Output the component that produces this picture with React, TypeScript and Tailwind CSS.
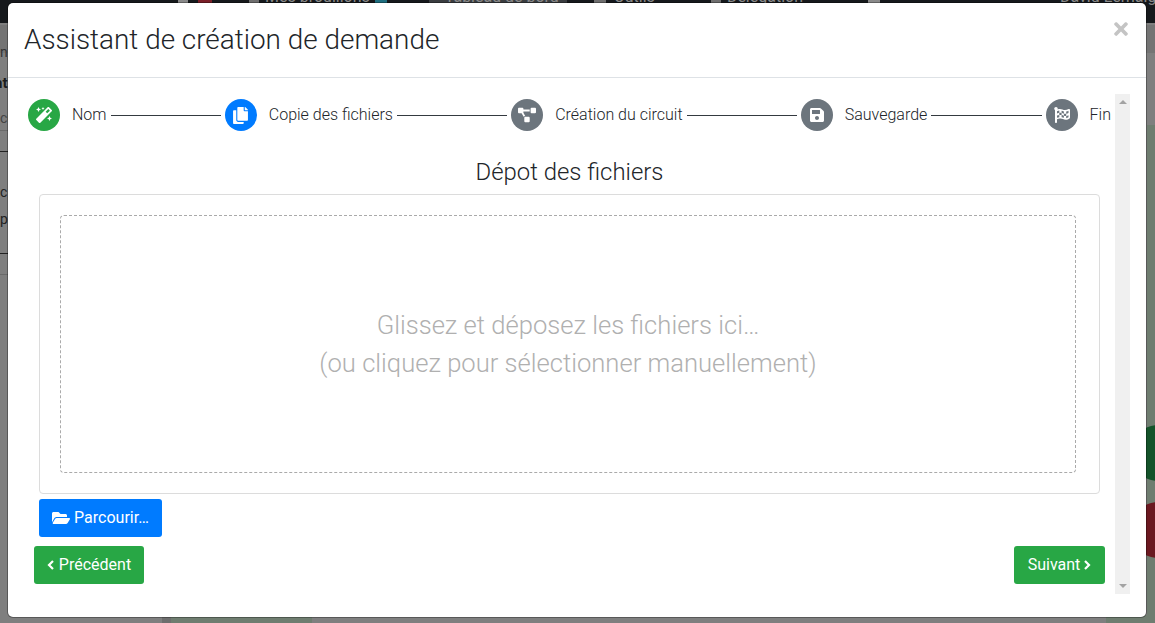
import { FaMagic, FaCopy, FaProjectDiagram, FaSave, FaFlagCheckered, FaFolderOpen, FaTimes } from "react-icons/fa";
import type { ReactNode } from "react";

function Step({ icon, color, label }: { icon: ReactNode; color: string; label: string }) {
  return (
    <div className="flex items-center">
      <span className={`flex h-8 w-8 shrink-0 items-center justify-center rounded-full text-white ${color}`}>{icon}</span>
      <span className="ml-3 text-[16px] font-light text-[#212529]">{label}</span>
    </div>
  );
}

function Line() {
  return <div className="mx-1 h-px flex-1 bg-[#343a40]" />;
}

function Chevron({ points }: { points: string }) {
  return (
    <svg viewBox="0 0 7 10" className="h-[10px] w-[7px]" fill="none" stroke="currentColor" strokeWidth="2.2">
      <polyline points={points} />
    </svg>
  );
}

export default function App() {
  return (
    <div className="relative h-[623px] w-[1155px] overflow-hidden bg-[#7f7f7f] font-['Roboto',sans-serif]">
      {/* page behind the overlay */}
      <div className="flex h-[23px] items-start whitespace-nowrap bg-[#16191c] text-[16px] leading-none text-[#8a8a8a]">
        <span className="ml-[178px] h-[3px] w-[10px] shrink-0 bg-[#8a8a8a]" />
        <span className="ml-[10px] h-[3px] w-[14px] shrink-0 bg-[#7a1f28]" />
        <span className="ml-[37px] h-[3px] w-[10px] shrink-0 bg-[#6f6f6f]" />
        <span className="ml-[6px] -mt-[11px] shrink-0">Mes brouillons</span>
        <span className="ml-[5px] h-[3px] w-[12px] shrink-0 bg-[#1f6f80]" />
        <span className="ml-[42px] flex h-[3px] w-[138px] shrink-0 items-start bg-[#3a3d40]">
          <span className="ml-[16px] -mt-[11px]">Tableau de bord</span>
        </span>
        <span className="ml-[27px] h-[3px] w-[12px] shrink-0 bg-[#6f6f6f]" />
        <span className="ml-[8px] -mt-[11px] shrink-0">Outils</span>
        <span className="ml-[56px] h-[3px] w-[10px] shrink-0 bg-[#6f6f6f]" />
        <span className="ml-[6px] -mt-[11px] shrink-0">Délégation</span>
        <span className="ml-[65px] h-[3px] w-[12px] shrink-0 bg-[#8a8a8a]" />
        <span className="ml-[180px] -mt-[11px] shrink-0">David Lemaig</span>
      </div>
      <div className="absolute left-0 top-[25px] h-[28px] w-full bg-[#747474]" />
      <div className="absolute left-0 top-[44px] w-2 overflow-hidden whitespace-nowrap text-[14px] leading-[16px] text-[#333]">nc</div>
      <div className="absolute left-[-6px] top-[74px] w-[14px] overflow-hidden whitespace-nowrap text-[15px] font-bold leading-[18px] text-[#1c1c1c]">nt</div>
      <div className="absolute left-0 top-[110px] w-2 overflow-hidden whitespace-nowrap text-[14px] leading-[16px] text-[#444]">cu</div>
      <div className="absolute left-0 top-[130px] h-px w-2 bg-[#6a6a6a]" />
      <div className="absolute left-0 top-[151px] h-px w-2 bg-[#222]" />
      <div className="absolute left-0 top-[184px] w-2 overflow-hidden text-[14px] leading-[16px] text-[#222]">c</div>
      <div className="absolute left-0 top-[211px] w-2 overflow-hidden text-[14px] leading-[16px] text-[#222]">p</div>
      <div className="absolute left-0 top-[253px] h-px w-2 bg-[#222]" />
      <div className="absolute left-0 top-[274px] h-px w-2 bg-[#6a6a6a]" />
      <div className="absolute left-[1147px] top-[125px] h-[498px] w-2 bg-[#6f7d70]" />
      <div className="absolute left-[1130px] top-[425px] h-[56px] w-[56px] rounded-full bg-[#14532a]" />
      <div className="absolute left-[1130px] top-[502px] h-[56px] w-[56px] rounded-full bg-[#6b1820]" />
      <div className="absolute bottom-0 left-[162px] h-[8px] w-[9px] bg-[#6e6e6e]" />
      <div className="absolute bottom-0 left-[171px] h-[8px] w-[141px] bg-[#6f7d70]" />
      <div className="absolute bottom-0 left-[1106px] h-[8px] w-[49px] bg-[#6f7d70]" />

      {/* modal */}
      <div className="absolute left-2 top-[3px] flex h-[614px] w-[1138px] flex-col rounded-[5px] bg-white shadow-[0_0_0_1px_rgba(0,0,0,0.3)]">
        <div className="relative flex h-[75px] items-center border-b border-[#dee2e6] pl-4">
          <h5 className="text-[27.9px] font-light text-[#212529]">Assistant de création de demande</h5>
          <FaTimes className="absolute right-[15px] top-[16px] text-[20px] text-[#c4c4c4]" />
        </div>
        <div className="flex flex-1 pt-[16px]">
          <div className="flex w-[1103px] flex-col pl-[20px]">
            <div className="mt-[5px] flex h-8 items-center">
              <Step icon={<FaMagic className="text-[16px]" />} color="bg-[#28a745]" label="Nom" />
              <Line />
              <Step icon={<FaCopy className="text-[17px]" />} color="bg-[#007bff]" label="Copie des fichiers" />
              <Line />
              <Step icon={<FaProjectDiagram className="text-[18px]" />} color="bg-[#6c757d]" label="Création du circuit" />
              <Line />
              <Step icon={<FaSave className="text-[16px]" />} color="bg-[#6c757d]" label="Sauvegarde" />
              <Line />
              <Step icon={<FaFlagCheckered className="text-[16px]" />} color="bg-[#6c757d]" label="Fin" />
            </div>
            <h5 className="mt-[25px] h-[32px] text-center text-[23.9px] font-light leading-[32px] text-[#212529]">Dépot des fichiers</h5>
            <div className="ml-[11px] mr-[11px] mt-[6px] h-[300px] rounded border border-[#dcdcdc] py-5 pl-5 pr-[23px]">
              <div className="flex h-full flex-col items-center justify-center rounded-sm border border-dashed border-[#aaa] text-[25.6px] font-light leading-[38px] text-[#b0b0b0]">
                <span>Glissez et déposez les fichiers ici…</span>
                <span>(ou cliquez pour sélectionner manuellement)</span>
              </div>
            </div>
            <button className="ml-[11px] mt-[5px] flex h-[38px] w-[123px] items-center justify-center gap-1 rounded-[3px] bg-[#007bff] text-[16px] text-white">
              <FaFolderOpen className="text-[18px]" />
              Parcourir…
            </button>
            <div className="ml-[6px] mr-[6px] mt-[9px] flex justify-between">
              <button className="flex h-[38px] w-[110px] items-center justify-center gap-[5px] rounded-[3px] bg-[#28a745] text-[16px] text-white">
                <Chevron points="6,1 2,5 6,9" />
                Précédent
              </button>
              <button className="flex h-[38px] w-[91px] items-center justify-center gap-1 rounded-[3px] bg-[#28a745] text-[16px] text-white">
                Suivant
                <Chevron points="1,1 5,5 1,9" />
              </button>
            </div>
          </div>
          <div className="ml-[4px] flex h-[500px] w-[15px] flex-col items-center justify-between bg-[#f0f0f0] py-[6px]">
            <div className="h-0 w-0 border-x-[4px] border-b-[4px] border-x-transparent border-b-[#a3a3a3]" />
            <div className="h-0 w-0 border-x-[4px] border-t-[4px] border-x-transparent border-t-[#a3a3a3]" />
          </div>
        </div>
      </div>
    </div>
  );
}
